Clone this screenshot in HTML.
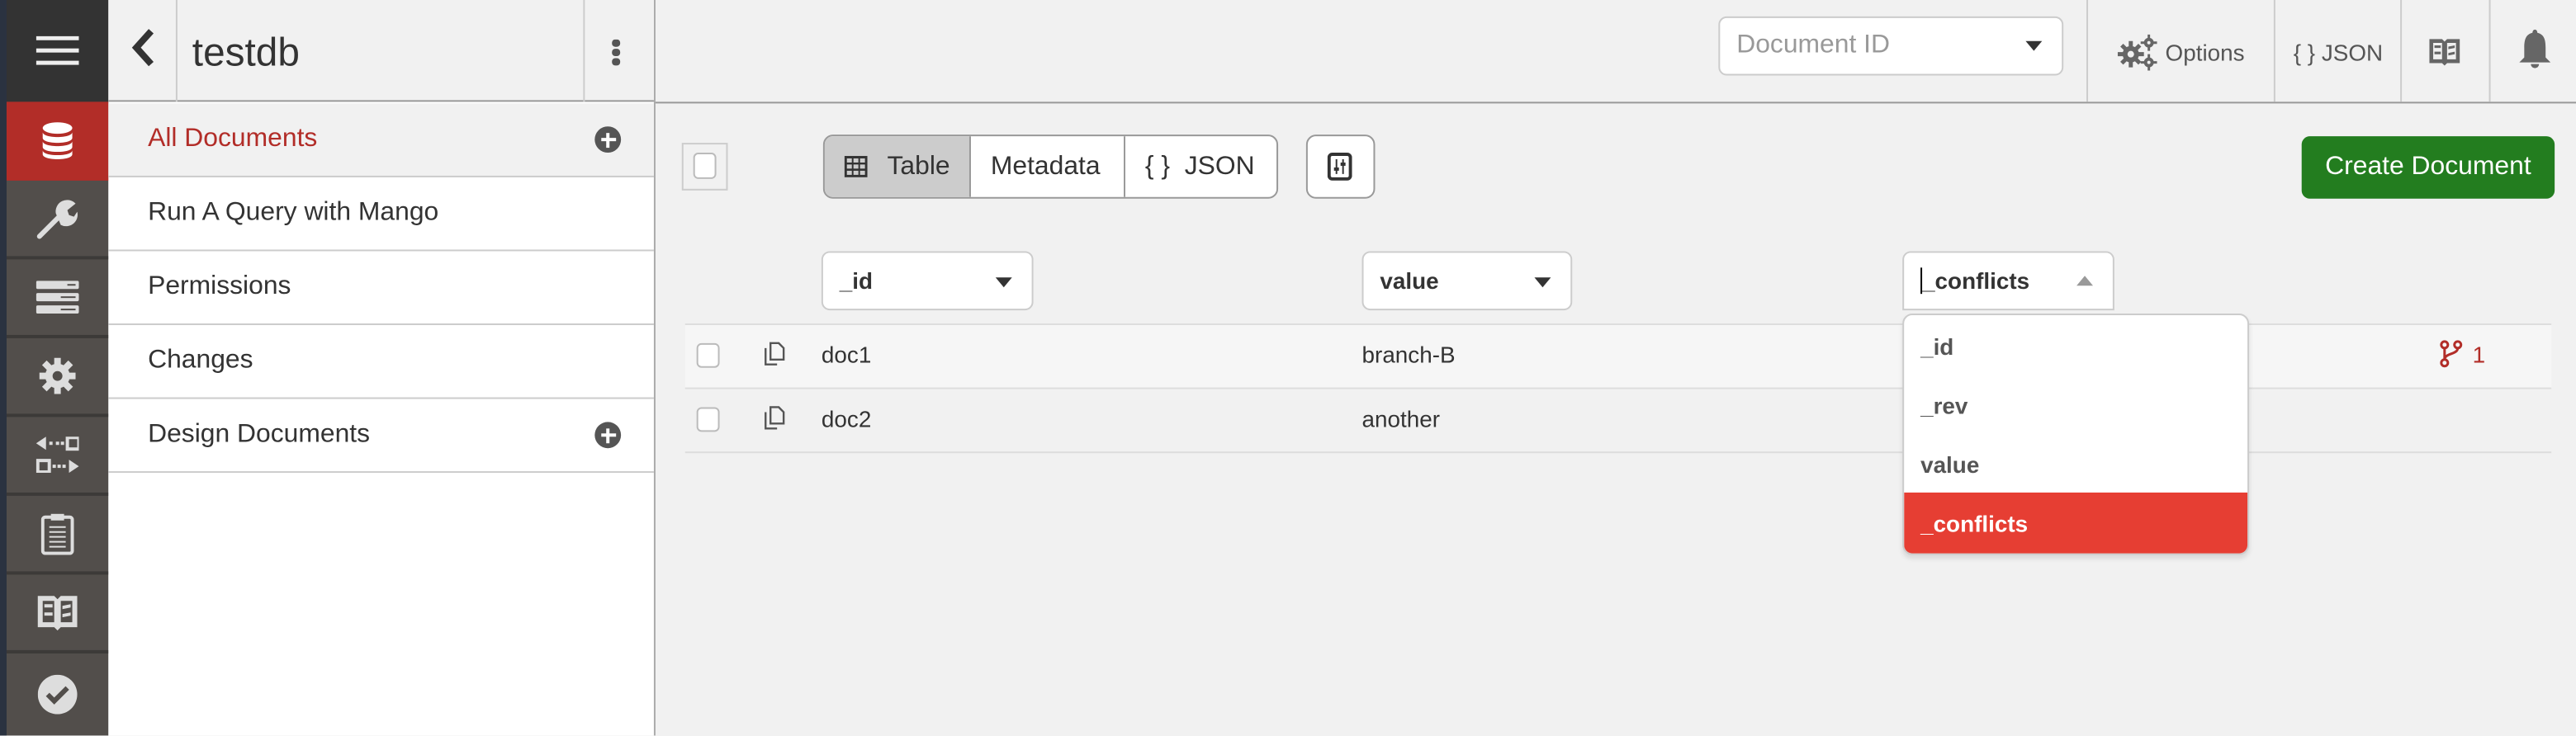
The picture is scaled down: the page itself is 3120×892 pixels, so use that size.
<!DOCTYPE html>
<html><head><meta charset="utf-8"><style>
*{box-sizing:border-box;margin:0;padding:0}
html,body{width:3120px;height:892px;overflow:hidden;background:#f1f1f1;font-family:"Liberation Sans",Arial,sans-serif}
#w{position:absolute;left:0;top:0;width:1568px;height:448px;transform:scale(1.98980);transform-origin:0 0;background:#f1f1f1;color:#333}
.a{position:absolute}
.nav{left:0;top:0;width:66px;height:448px;background:#524e4b;border-left:4px solid #2a3240}
.ni{position:absolute;left:0;width:62px;height:48px;border-bottom:2px solid #3c3a38;display:flex;align-items:center;justify-content:center}
.side{left:66px;top:0;width:333px;height:448px;background:#fff;border-right:1px solid #aaa}
.mi{position:absolute;left:0;width:332px;height:45px;border-bottom:1px solid #ccc;font-size:16px;padding-left:24px;line-height:44px;color:#333}
.plus{position:absolute;right:20px;top:14px;width:16px;height:16px;border-radius:50%;background:#555}
.plus:before,.plus:after{content:"";position:absolute;background:#fff;left:3.5px;top:7px;width:9px;height:2px}
.plus:after{left:7px;top:3.5px;width:2px;height:9px}
.sel{background:#fff;border:1px solid #ccc;border-radius:5px;height:36px;font-weight:bold;font-size:14px;line-height:34px;padding-left:10px}
.tri{position:absolute;right:12px;top:15px;width:0;height:0;border-left:5px solid transparent;border-right:5px solid transparent;border-top:6px solid #333}
.cb{position:absolute;width:14px;height:14px;border:1px solid #bbb;border-radius:3px;background:#fff}
.row{left:417px;width:1136px;height:39px;border-bottom:1px solid #ddd;font-size:14px}
.vd{top:0;width:1px;height:62px;background:#ccc}
</style></head><body><div id="w">
<div class="a nav">
 <div class="ni" style="top:0;height:62px;background:#333;border:0">
  <svg width="26" height="18"><rect y="0" width="26" height="2.5" fill="#eee"/><rect y="7.5" width="26" height="2.5" fill="#eee"/><rect y="15" width="26" height="2.5" fill="#eee"/></svg></div>
 <div class="ni" style="top:62px;height:48px;background:#b22d28;border:0">
  <svg width="20" height="24" viewBox="0 0 20 24"><ellipse cx="10" cy="4" rx="9" ry="3.5" fill="#fff"/><path d="M1 6.5c0 4 18 4 18 0v3.5c0 4-18 4-18 0z M1 12c0 4 18 4 18 0v3.5c0 4-18 4-18 0z M1 17.5c0 4 18 4 18 0V20c0 4-18 4-18 0z" fill="#fff"/></svg></div>
 <div class="ni" style="top:110px"><svg width="26" height="26" viewBox="0 0 26 26"><path d="M2 24L14 12" stroke="#ddd" stroke-width="3" stroke-linecap="round"/><path d="M12 10a7 7 0 0 1 12-6l-5 4 1 3 3 1 2-3a7 7 0 0 1-10 8z" fill="#ddd"/></svg></div>
 <div class="ni" style="top:158px"><svg width="26" height="20"><rect y="0" width="26" height="5" rx="1" fill="#ddd"/><rect y="7.5" width="26" height="5" rx="1" fill="#ddd"/><rect y="15" width="26" height="5" rx="1" fill="#ddd"/><rect x="19" y="2" width="5" height="1" fill="#524e4b"/><rect x="15" y="9.5" width="9" height="1" fill="#524e4b"/><rect x="15" y="17" width="9" height="1" fill="#524e4b"/></svg></div>
 <div class="ni" style="top:206px"><svg width="24" height="24" viewBox="0 0 24 24"><circle cx="12" cy="12" r="7.5" fill="#ddd"/><g stroke="#ddd" stroke-width="4"><path d="M12 1v22M1 12h22M4 4l16 16M20 4L4 20"/></g><circle cx="12" cy="12" r="3" fill="#524e4b"/></svg></div>
 <div class="ni" style="top:254px"><svg width="26" height="22" viewBox="0 0 26 22"><path d="M0 4l6-4v8z" fill="#ddd"/><rect x="8" y="3" width="2" height="2" fill="#ddd"/><rect x="12" y="3" width="2" height="2" fill="#ddd"/><rect x="15" y="3" width="2" height="2" fill="#ddd"/><rect x="19" y="0.5" width="7" height="7" fill="none" stroke="#ddd" stroke-width="2"/><rect x="1" y="14.5" width="7" height="7" fill="none" stroke="#ddd" stroke-width="2"/><rect x="10" y="17" width="2" height="2" fill="#ddd"/><rect x="13" y="17" width="2" height="2" fill="#ddd"/><rect x="16" y="17" width="2" height="2" fill="#ddd"/><path d="M20 14l6 4-6 4z" fill="#ddd"/></svg></div>
 <div class="ni" style="top:302px"><svg width="20" height="26" viewBox="0 0 20 26"><rect x="1" y="3" width="18" height="22" rx="1.5" fill="none" stroke="#ddd" stroke-width="2"/><rect x="6" y="1" width="8" height="4" fill="#ddd"/><g stroke="#ddd" stroke-width="1"><path d="M5 9h10M5 12h10M5 15h10M5 18h10M5 21h10"/></g></svg></div>
 <div class="ni" style="top:350px"><svg width="26" height="24" viewBox="0 0 26 24"><path d="M1 2h10l2 2 2-2h10v19H15l-2 2-2-2H1z" fill="#ddd"/><path d="M4 5h7v13H4zM15 5h7v13h-7z" fill="#524e4b"/><path d="M5 7h5v2H5zM5 12h5v2H5zM16 8l5-1v2l-5 1zM16 13l5-1v2l-5 1z" fill="#ddd"/></svg></div>
 <div class="ni" style="top:398px;height:50px;border:0"><svg width="24" height="24"><circle cx="12" cy="12" r="12" fill="#ddd"/><path d="M6 12l4 4 8-8" stroke="#524e4b" stroke-width="3" fill="none"/></svg></div>
</div>
<div class="a side">
 <div class="a" style="left:0;top:0;width:332px;height:62px;background:#f1f1f1;border-bottom:1px solid #999"></div>
 <svg class="a" style="left:13px;top:17px" width="16" height="24"><path d="M13 2L4 12l9 10" stroke="#333" stroke-width="4" fill="none"/></svg>
 <div class="a" style="left:41px;top:0;width:1px;height:62px;background:#ccc"></div>
 <div class="a" style="left:51px;top:19px;font-size:24px;color:#333">testdb</div>
 <div class="a" style="left:289px;top:0;width:1px;height:62px;background:#ccc"></div>
 <svg class="a" style="left:306px;top:24px" width="6" height="16"><rect x="0.5" y="0" width="5" height="4.5" rx="2" fill="#555"/><rect x="0.5" y="5.7" width="5" height="4.5" rx="2" fill="#555"/><rect x="0.5" y="11.4" width="5" height="4.5" rx="2" fill="#555"/></svg>
 <div class="mi" style="top:63px;background:#f1f1f1;color:#b22d28">All Documents<span class="plus"></span></div>
 <div class="mi" style="top:108px">Run A Query with Mango</div>
 <div class="mi" style="top:153px">Permissions</div>
 <div class="mi" style="top:198px">Changes</div>
 <div class="mi" style="top:243px">Design Documents<span class="plus"></span></div>
</div>
<div class="a" style="left:399px;top:62px;width:1169px;height:1px;background:#999"></div>
<div class="a" style="left:1046px;top:10px;width:210px;height:36px;background:#fff;border:1px solid #ccc;border-radius:5px;font-size:16px;color:#999;line-height:34px;padding-left:10px">Document ID<span class="tri" style="top:14px;border-top-color:#333"></span></div>
<div class="a vd" style="left:1270px"></div><div class="a vd" style="left:1384px"></div><div class="a vd" style="left:1461px"></div><div class="a vd" style="left:1515px"></div>
<svg class="a" style="left:1289px;top:21px" width="24" height="22" viewBox="0 0 24 22"><g fill="#666"><circle cx="8" cy="12" r="5"/><g stroke="#666" stroke-width="2.5"><path d="M8 4v16M0 12h16M2.5 6.5l11 11M13.5 6.5l-11 11"/></g><circle cx="19" cy="5" r="3"/><g stroke="#666" stroke-width="1.5"><path d="M19 0v10M14 5h10"/></g><circle cx="19" cy="17" r="3"/><g stroke="#666" stroke-width="1.5"><path d="M19 12v10M14 17h10"/></g></g><circle cx="8" cy="12" r="2" fill="#f1f1f1"/><circle cx="19" cy="5" r="1" fill="#f1f1f1"/><circle cx="19" cy="17" r="1" fill="#f1f1f1"/></svg>
<div class="a" style="left:1318px;top:24px;font-size:14px;color:#555">Options</div>
<div class="a" style="left:1396px;top:24px;font-size:14px;color:#555">{ } JSON</div>
<svg class="a" style="left:1478px;top:22px" width="20" height="19" viewBox="0 0 26 24"><path d="M1 2h10l2 2 2-2h10v19H15l-2 2-2-2H1z" fill="#666"/><path d="M4 5h7v13H4zM15 5h7v13h-7z" fill="#f1f1f1"/><path d="M5 7h5v2H5zM5 12h5v2H5zM16 8l5-1v2l-5 1zM16 13l5-1v2l-5 1z" fill="#666"/></svg>
<svg class="a" style="left:1533px;top:17px" width="20" height="28" viewBox="0 0 20 28"><path d="M10 1c1 0 1.5 1 1.5 2 4 1 5 4 5 9v6l3 3H0.5l3-3v-6c0-5 1-8 5-9 0-1 .5-2 1.5-2z" fill="#666"/><path d="M7.5 22a2.5 2.5 0 0 0 5 0" fill="#666"/></svg>
<div class="a" style="left:415px;top:87px;width:28px;height:29px;border:1px solid #ccc"></div>
<div class="cb" style="left:422px;top:93px;width:14px;height:16px"></div>
<div class="a" style="left:501px;top:82px;width:277px;height:39px;border:1px solid #999;border-radius:6px;background:#fff;overflow:hidden;font-size:16px">
 <div class="a" style="left:0;top:0;width:89px;height:37px;background:#ccc;border-right:1px solid #999"></div>
 <svg class="a" style="left:12px;top:12px" width="14" height="13"><rect width="14" height="13" fill="#333"/><g fill="#ccc"><rect x="1.5" y="1.5" width="3" height="2.5"/><rect x="5.5" y="1.5" width="3" height="2.5"/><rect x="9.5" y="1.5" width="3" height="2.5"/><rect x="1.5" y="5.2" width="3" height="2.5"/><rect x="5.5" y="5.2" width="3" height="2.5"/><rect x="9.5" y="5.2" width="3" height="2.5"/><rect x="1.5" y="9" width="3" height="2.5"/><rect x="5.5" y="9" width="3" height="2.5"/><rect x="9.5" y="9" width="3" height="2.5"/></g></svg>
 <div class="a" style="left:38px;top:10px">Table</div>
 <div class="a" style="left:101px;top:10px">Metadata</div>
 <div class="a" style="left:182px;top:0;width:1px;height:37px;background:#999"></div>
 <div class="a" style="left:195px;top:10px">{ }&nbsp; JSON</div>
</div>
<div class="a" style="left:795px;top:82px;width:42px;height:39px;border:1px solid #999;border-radius:6px;background:#fff"></div>
<svg class="a" style="left:808px;top:93px" width="15" height="17"><rect x="1" y="1" width="13" height="15" rx="2" fill="none" stroke="#333" stroke-width="2"/><path d="M5.5 4v9M9.5 4v9" stroke="#333" stroke-width="1"/><rect x="4" y="9" width="3" height="2" fill="#333"/><rect x="8" y="6" width="3" height="2" fill="#333"/></svg>
<div class="a" style="left:1401px;top:83px;width:154px;height:38px;background:#237d1f;border-radius:5px;color:#fff;font-size:16px;line-height:38px;text-align:center">Create Document</div>
<div class="a sel" style="left:500px;top:153px;width:129px">_id<span class="tri"></span></div>
<div class="a sel" style="left:829px;top:153px;width:128px">value<span class="tri"></span></div>
<div class="a sel" style="left:1158px;top:153px;width:129px;border-radius:5px 5px 0 0"><span style="border-left:1px solid #000"></span>_conflicts<span class="tri" style="border-top:0;border-bottom:6px solid #999;top:14px"></span></div>
<div class="a" style="left:417px;top:197px;width:1136px;height:1px;background:#ddd"></div>
<div class="a row" style="top:198px;background:#f6f6f6"></div>
<div class="a row" style="top:237px"></div>
<div class="cb" style="left:424px;top:209px;height:15px"></div>
<div class="cb" style="left:424px;top:248px;height:15px"></div>
<svg class="a" style="left:465px;top:208px" width="13" height="15"><path d="M4 1h5l3 3v7H4z M1 4v10h7" fill="none" stroke="#555" stroke-width="1.2"/></svg>
<svg class="a" style="left:465px;top:247px" width="13" height="15"><path d="M4 1h5l3 3v7H4z M1 4v10h7" fill="none" stroke="#555" stroke-width="1.2"/></svg>
<div class="a" style="left:500px;top:208px;font-size:14px">doc1</div>
<div class="a" style="left:829px;top:208px;font-size:14px">branch-B</div>
<div class="a" style="left:500px;top:247px;font-size:14px">doc2</div>
<div class="a" style="left:829px;top:247px;font-size:14px">another</div>
<svg class="a" style="left:1485px;top:207px" width="14" height="17" viewBox="0 0 14 17"><g fill="none" stroke="#b22d28" stroke-width="1.5"><circle cx="3" cy="3" r="2"/><circle cx="11" cy="3" r="2"/><circle cx="3" cy="14" r="2"/><path d="M3 5v7M11 5c0 4-8 3-8 7"/></g></svg>
<div class="a" style="left:1505px;top:208px;font-size:14px;color:#b22d28">1</div>
<div class="a" style="left:1158px;top:191px;width:211px;height:147px;background:#fff;border:1px solid #ccc;border-radius:6px;overflow:hidden;box-shadow:0 2px 3px rgba(0,0,0,.1);font-size:14px;font-weight:bold;color:#555">
 <div class="a" style="left:10px;top:11px">_id</div>
 <div class="a" style="left:10px;top:47px">_rev</div>
 <div class="a" style="left:10px;top:83px">value</div>
 <div class="a" style="left:0;top:108px;width:211px;height:38px;background:#e63e33;color:#fff;padding-left:10px;line-height:38px">_conflicts</div>
</div>
</div></body></html>
